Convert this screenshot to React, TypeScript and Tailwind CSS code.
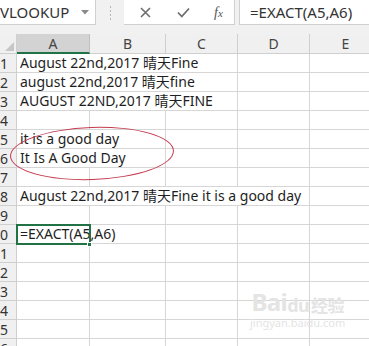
const cols = [
  { key: "A", w: 73 },
  { key: "B", w: 76 },
  { key: "C", w: 72 },
  { key: "D", w: 72 },
  { key: "E", w: 72 },
];

// text that spills over into the next empty cells: span = number of columns covered
const rows: { n: number; text?: string; span?: number }[] = [
  { n: 1, text: "August 22nd,2017 晴天Fine", span: 3 },
  { n: 2, text: "august 22nd,2017 晴天fine", span: 3 },
  { n: 3, text: "AUGUST 22ND,2017 晴天FINE", span: 3 },
  { n: 4 },
  { n: 5, text: "it is a good day", span: 2 },
  { n: 6, text: "It Is A Good Day", span: 2 },
  { n: 7 },
  { n: 8, text: "August 22nd,2017 晴天Fine it is a good day", span: 4 },
  { n: 9 },
  { n: 10, text: "=EXACT(A5,A6)", span: 2 },
  { n: 11 },
  { n: 12 },
  { n: 13 },
  { n: 14 },
  { n: 15 },
  { n: 16 },
];

const font = "font-['Noto_Sans','Noto_Sans_CJK_SC',sans-serif]";

function SheetRow({ n, text, span = 1 }: { n: number; text?: string; span?: number }) {
  const spanW = cols.slice(0, span).reduce((s, c) => s + c.w, 0);
  return (
    <div className="flex h-[19px] shrink-0">
      <div className="flex w-[17px] shrink-0 items-center justify-end overflow-hidden border-b border-r border-[#cfcfcf] bg-[#f0f0f0] pr-[8px] text-[14px] text-[#333]">
        {n}
      </div>
      <div
        className="shrink-0 overflow-visible whitespace-nowrap border-b border-r border-[#d6d6d6] bg-white pl-[3px] text-[14px] leading-[18px] text-[#1e1e1e]"
        style={{ width: spanW }}
      >
        {text}
      </div>
      {cols.slice(span).map((c) => (
        <div
          key={c.key}
          className="shrink-0 border-b border-r border-[#d6d6d6] bg-white"
          style={{ width: c.w }}
        />
      ))}
    </div>
  );
}

export default function App() {
  return (
    <div className={`relative h-[346px] w-[369px] overflow-hidden bg-[#f1f1f1] ${font}`}>
      {/* formula bar */}
      <div className="flex h-[25px]">
        <div className="flex w-[96px] shrink-0 items-center justify-between border-b border-r border-[#d0d0d0] bg-white pr-[6px]">
          <span className="text-[15px] text-[#333]">VLOOKUP</span>
          <svg width="8" height="5" viewBox="0 0 8 5">
            <path d="M0 0 L8 0 L4 4.5 Z" fill="#8a8a8a" />
          </svg>
        </div>
        <div className="flex w-[28px] shrink-0 items-center justify-center">
          <div className="flex flex-col gap-[2px]">
            <span className="h-[2px] w-[1px] bg-[#b5b5b5]" />
            <span className="h-[2px] w-[1px] bg-[#b5b5b5]" />
            <span className="h-[2px] w-[1px] bg-[#b5b5b5]" />
            <span className="h-[2px] w-[1px] bg-[#b5b5b5]" />
          </div>
        </div>
        <div className="flex w-[111px] shrink-0 items-center border-b border-r border-[#d0d0d0] bg-white">
          <svg className="ml-[16px]" width="11" height="11" viewBox="0 0 11 11">
            <path d="M1 1 L10 10 M10 1 L1 10" stroke="#6e6e6e" strokeWidth="1.6" />
          </svg>
          <svg className="ml-[26px]" width="13" height="11" viewBox="0 0 13 11">
            <path d="M1 5.5 L4.8 9.5 L12 1.5" stroke="#6e6e6e" strokeWidth="1.8" fill="none" />
          </svg>
          <span className="ml-[24px] font-['Liberation_Serif',serif] text-[14px] italic text-[#555]">
            f<span className="text-[11px]">x</span>
          </span>
        </div>
        <div className="w-[4px] shrink-0" />
        <div className="flex flex-1 items-center border-b border-l border-[#d0d0d0] bg-white pl-[10px] text-[15px] text-[#333]">
          =EXACT(A5,A6)
        </div>
      </div>

      {/* column headers */}
      <div className="mt-[9px] flex h-[20px]">
        <div className="relative w-[17px] shrink-0 border-b border-r border-[#cfcfcf] bg-[#f0f0f0]">
          <svg className="absolute bottom-[2px] right-[2px]" width="9" height="9" viewBox="0 0 9 9">
            <path d="M9 0 L9 9 L0 9 Z" fill="#c6c6c6" />
          </svg>
        </div>
        {cols.map((c) => (
          <div
            key={c.key}
            className={`flex shrink-0 items-center justify-center border-r text-[14px] text-[#444] ${
              c.key === "A"
                ? "border-b-2 border-b-[#217346] border-r-[#c0c0c0] bg-[#d3d3d3]"
                : "border-b border-[#cfcfcf] bg-[#f0f0f0]"
            }`}
            style={{ width: c.w }}
          >
            {c.key}
          </div>
        ))}
      </div>

      {/* grid */}
      <div className="flex flex-col">
        {rows.map((r) => (
          <SheetRow key={r.n} n={r.n} text={r.text} span={r.span} />
        ))}
      </div>

      {/* active cell A10 */}
      <div className="pointer-events-none absolute left-[16px] top-[224px] h-[21px] w-[75px] border-2 border-[#217346]" />
      <div className="absolute left-[87px] top-[242px] h-[5px] w-[5px] border border-white bg-[#217346]" />

      {/* hand-drawn ellipse */}
      <div className="pointer-events-none absolute left-[10px] top-[127px] h-[53px] w-[164px] rotate-[-2deg] rounded-[50%] border border-[#c43a4e]" />

      {/* watermark */}
      <div className="pointer-events-none absolute left-[250px] top-[290px] flex flex-col items-center text-[#e4e4e4]">
        <div className="flex items-end text-[24px] font-bold leading-none tracking-tight">
          <span>Bai</span>
          <span className="text-[18px]">du</span>
          <span className="ml-[2px] text-[17px]">经验</span>
        </div>
        <span className="mt-[3px] text-[11px] leading-none">jingyan.baidu.com</span>
      </div>
    </div>
  );
}
